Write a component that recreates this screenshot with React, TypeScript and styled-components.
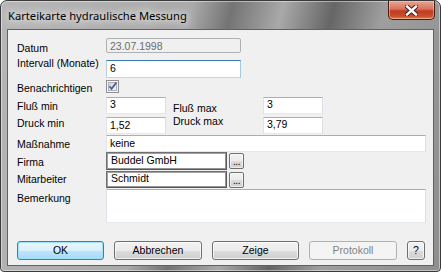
import React from "react";
import styled, { createGlobalStyle } from "styled-components";

const GlobalStyle = createGlobalStyle`
  html, body {
    margin: 0;
    padding: 0;
    background: #ffffff;
  }
  body {
    width: 441px;
    height: 272px;
    overflow: hidden;
  }
`;

const Window = styled.div`
  box-sizing: border-box;
  width: 441px;
  height: 272px;
  border: 1px solid #3a3a3a;
  border-radius: 7px 7px 4px 4px;
  background: linear-gradient(
    104deg,
    #b6b6b6 0%,
    #aaaaaa 38%,
    #747474 46%,
    #a9a9a9 56%,
    #666666 66%,
    #9e9e9e 76%,
    #8e8e8e 100%
  );
  box-shadow: inset 0 0 0 1px rgba(255, 255, 255, 0.45);
  display: flex;
  flex-direction: column;
  padding-bottom: 5px;
  overflow: hidden;
  font-family: "Liberation Sans", Arial, sans-serif;
  font-size: 10.5px;
  color: #000;
`;

const TitleBar = styled.div`
  height: 28px;
  display: flex;
  align-items: center;
  padding-left: 7px;
`;

const Title = styled.div`
  font-family: "Noto Sans", "Open Sans", sans-serif;
  font-size: 11.2px;
  color: #000;
  text-shadow: 0 0 6px rgba(255, 255, 255, 0.95), 0 0 12px rgba(255, 255, 255, 0.9),
    0 0 18px rgba(255, 255, 255, 0.7);
`;

const CloseButton = styled.div`
  align-self: flex-start;
  margin-left: auto;
  margin-right: 5px;
  width: 47px;
  height: 19px;
  box-sizing: border-box;
  border: 1px solid #4a1c14;
  border-top: none;
  border-radius: 0 0 5px 5px;
  background: linear-gradient(#e8a493 0%, #d5735c 45%, #c23a22 55%, #c9502c 85%, #e2875a 100%);
  box-shadow: inset 0 0 0 1px rgba(255, 220, 200, 0.45);
  display: flex;
  align-items: center;
  justify-content: center;
`;

const Client = styled.div`
  flex: 1;
  margin: 0 6px;
  border: 1px solid #5e6267;
  background: #f0f0f0;
  padding: 8px 7px 0 9px;
  display: flex;
  flex-direction: column;
`;

const Row = styled.div<{ $mt: number }>`
  display: flex;
  align-items: flex-start;
  margin-top: ${({ $mt }) => $mt}px;
`;

const Label = styled.div<{ $top: number; $w?: number; $ml?: number }>`
  width: ${({ $w }) => $w ?? 89}px;
  margin-left: ${({ $ml }) => $ml ?? 0}px;
  margin-top: ${({ $top }) => $top}px;
  line-height: 13px;
  white-space: nowrap;
  flex-shrink: 0;
`;

const Edit = styled.div<{ $w: number; $h?: number; $pt?: number; $variant?: "normal" | "focus" | "disabled" | "sunken" }>`
  box-sizing: border-box;
  width: ${({ $w }) => $w}px;
  height: ${({ $h }) => $h ?? 17}px;
  padding: ${({ $pt }) => $pt ?? 1}px 3px 0;
  line-height: 13px;
  white-space: nowrap;
  overflow: hidden;
  background: ${({ $variant }) => ($variant === "disabled" ? "#f0f0f0" : "#ffffff")};
  color: ${({ $variant }) => ($variant === "disabled" ? "#6d6d6d" : "#000")};
  border: 1px solid;
  border-radius: ${({ $variant }) => ($variant === "disabled" ? "2px" : "0")};
  border-color: ${({ $variant }) =>
    $variant === "focus"
      ? "#3d7bad #a4c9e3 #b7d9ed #b5cfe7"
      : $variant === "disabled"
      ? "#adb2b5"
      : $variant === "sunken"
      ? "#707070 #5a5a5a #555555 #707070"
      : "#abadb3 #dbdfe6 #e3e9ef #e2e3ea"};
  box-shadow: ${({ $variant }) =>
    $variant === "sunken" ? "inset 1px 1px 0 #a0a0a0, inset -1px -1px 0 #959595" : "none"};
  padding-left: ${({ $variant }) => ($variant === "sunken" ? 4 : 3)}px;
`;

const Check = styled.div`
  width: 13px;
  height: 13px;
  flex-shrink: 0;
`;

const DotsButton = styled.div`
  box-sizing: border-box;
  width: 15px;
  height: 16px;
  margin: 1px 0 0 2px;
  border: 1px solid #707070;
  border-radius: 2px;
  background: linear-gradient(#f2f2f2 0%, #ebebeb 50%, #dddddd 50%, #cfcfcf 100%);
  box-shadow: inset 0 0 0 1px rgba(255, 255, 255, 0.6);
  display: flex;
  align-items: flex-end;
  justify-content: center;
  font-size: 10px;
  line-height: 10px;
  padding-bottom: 1px;
  letter-spacing: -0.5px;
`;

const ButtonBar = styled.div`
  display: flex;
  gap: 10px;
  margin-top: 18px;
`;

const Button = styled.div<{ $w: number; $kind?: "default" | "normal" | "disabled" }>`
  box-sizing: border-box;
  width: ${({ $w }) => $w}px;
  height: 19px;
  border-radius: 3px;
  border: 1px solid
    ${({ $kind }) => ($kind === "default" ? "#3c7fb1" : $kind === "disabled" ? "#adb2b5" : "#707070")};
  background: ${({ $kind }) =>
    $kind === "default"
      ? "linear-gradient(#eaf6fd 0%, #d9f0fc 50%, #bee6fd 50%, #a7d9f5 100%)"
      : $kind === "disabled"
      ? "#f4f4f4"
      : "linear-gradient(#f2f2f2 0%, #ebebeb 50%, #dddddd 50%, #cfcfcf 100%)"};
  box-shadow: ${({ $kind }) =>
    $kind === "default"
      ? "inset 0 0 0 1px #9ee0fa"
      : $kind === "disabled"
      ? "none"
      : "inset 0 0 0 1px rgba(255, 255, 255, 0.7)"};
  color: ${({ $kind }) => ($kind === "disabled" ? "#838383" : "#000")};
  display: flex;
  align-items: center;
  justify-content: center;
  line-height: 13px;
`;

const CloseIcon = () => (
  <svg width="13" height="11" viewBox="0 0 13 11">
    <path d="M2 1.5 L11 9.5 M11 1.5 L2 9.5" stroke="#3b2424" strokeWidth="4.4" strokeLinecap="square" />
    <path d="M2 1.5 L11 9.5 M11 1.5 L2 9.5" stroke="#ffffff" strokeWidth="2.4" strokeLinecap="square" />
  </svg>
);

const CheckIcon = () => (
  <svg width="13" height="13" viewBox="0 0 13 13">
    <defs>
      <linearGradient id="cbg" x1="0" y1="0" x2="1" y2="1">
        <stop offset="0" stopColor="#cbcfd5" />
        <stop offset="1" stopColor="#f6f6f6" />
      </linearGradient>
    </defs>
    <rect x="0.5" y="0.5" width="12" height="12" fill="#f4f4f4" stroke="#8f8f8f" />
    <rect x="2.5" y="2.5" width="8" height="8" fill="url(#cbg)" stroke="#aeb3b9" />
    <path d="M3.4 6.2 L5.6 8.8 L10.4 2.6" fill="none" stroke="#4b5e92" strokeWidth="1.7" />
  </svg>
);

const App: React.FC = () => {
  return (
    <>
      <GlobalStyle />
      <Window>
        <TitleBar>
          <Title>Karteikarte hydraulische Messung</Title>
          <CloseButton>
            <CloseIcon />
          </CloseButton>
        </TitleBar>
        <Client>
          <Row $mt={0}>
            <Label $top={4}>Datum</Label>
            <Edit $w={135} $h={15} $pt={1} $variant="disabled">
              23.07.1998
            </Edit>
          </Row>
          <Row $mt={5}>
            <Label $top={-3}>Intervall (Monate)</Label>
            <Edit $w={135} $h={18} $pt={1} $variant="focus">
              6
            </Edit>
          </Row>
          <Row $mt={2}>
            <Label $top={2}>Benachrichtigen</Label>
            <Check>
              <CheckIcon />
            </Check>
          </Row>
          <Row $mt={2}>
            <Label $top={3}>Fluß min</Label>
            <Edit $w={60} $pt={0}>
              3
            </Edit>
            <Label $top={5} $ml={7} $w={90}>
              Fluß max
            </Label>
            <Edit $w={60} $pt={0}>
              3
            </Edit>
          </Row>
          <Row $mt={2}>
            <Label $top={0}>Druck min</Label>
            <Edit $w={60} $pt={1}>
              1,52
            </Edit>
            <Label $top={-2} $ml={7} $w={90}>
              Druck max
            </Label>
            <Edit $w={60} $pt={0}>
              3,79
            </Edit>
          </Row>
          <Row $mt={1}>
            <Label $top={3}>Maßnahme</Label>
            <Edit $w={320} $pt={1}>
              keine
            </Edit>
          </Row>
          <Row $mt={0}>
            <Label $top={4}>Firma</Label>
            <Edit $w={121} $h={18} $pt={1} $variant="sunken">
              Buddel GmbH
            </Edit>
            <DotsButton>...</DotsButton>
          </Row>
          <Row $mt={1}>
            <Label $top={2}>Mitarbeiter</Label>
            <Edit $w={121} $h={17} $pt={0} $variant="sunken">
              Schmidt
            </Edit>
            <DotsButton>...</DotsButton>
          </Row>
          <Row $mt={1}>
            <Label $top={3}>Bemerkung</Label>
            <Edit $w={320} $h={34} />
          </Row>
          <ButtonBar>
            <Button $w={87} $kind="default">
              OK
            </Button>
            <Button $w={88}>Abbrechen</Button>
            <Button $w={87}>Zeige</Button>
            <Button $w={88} $kind="disabled">
              Protokoll
            </Button>
            <Button $w={18}>?</Button>
          </ButtonBar>
        </Client>
      </Window>
    </>
  );
};

export default App;
